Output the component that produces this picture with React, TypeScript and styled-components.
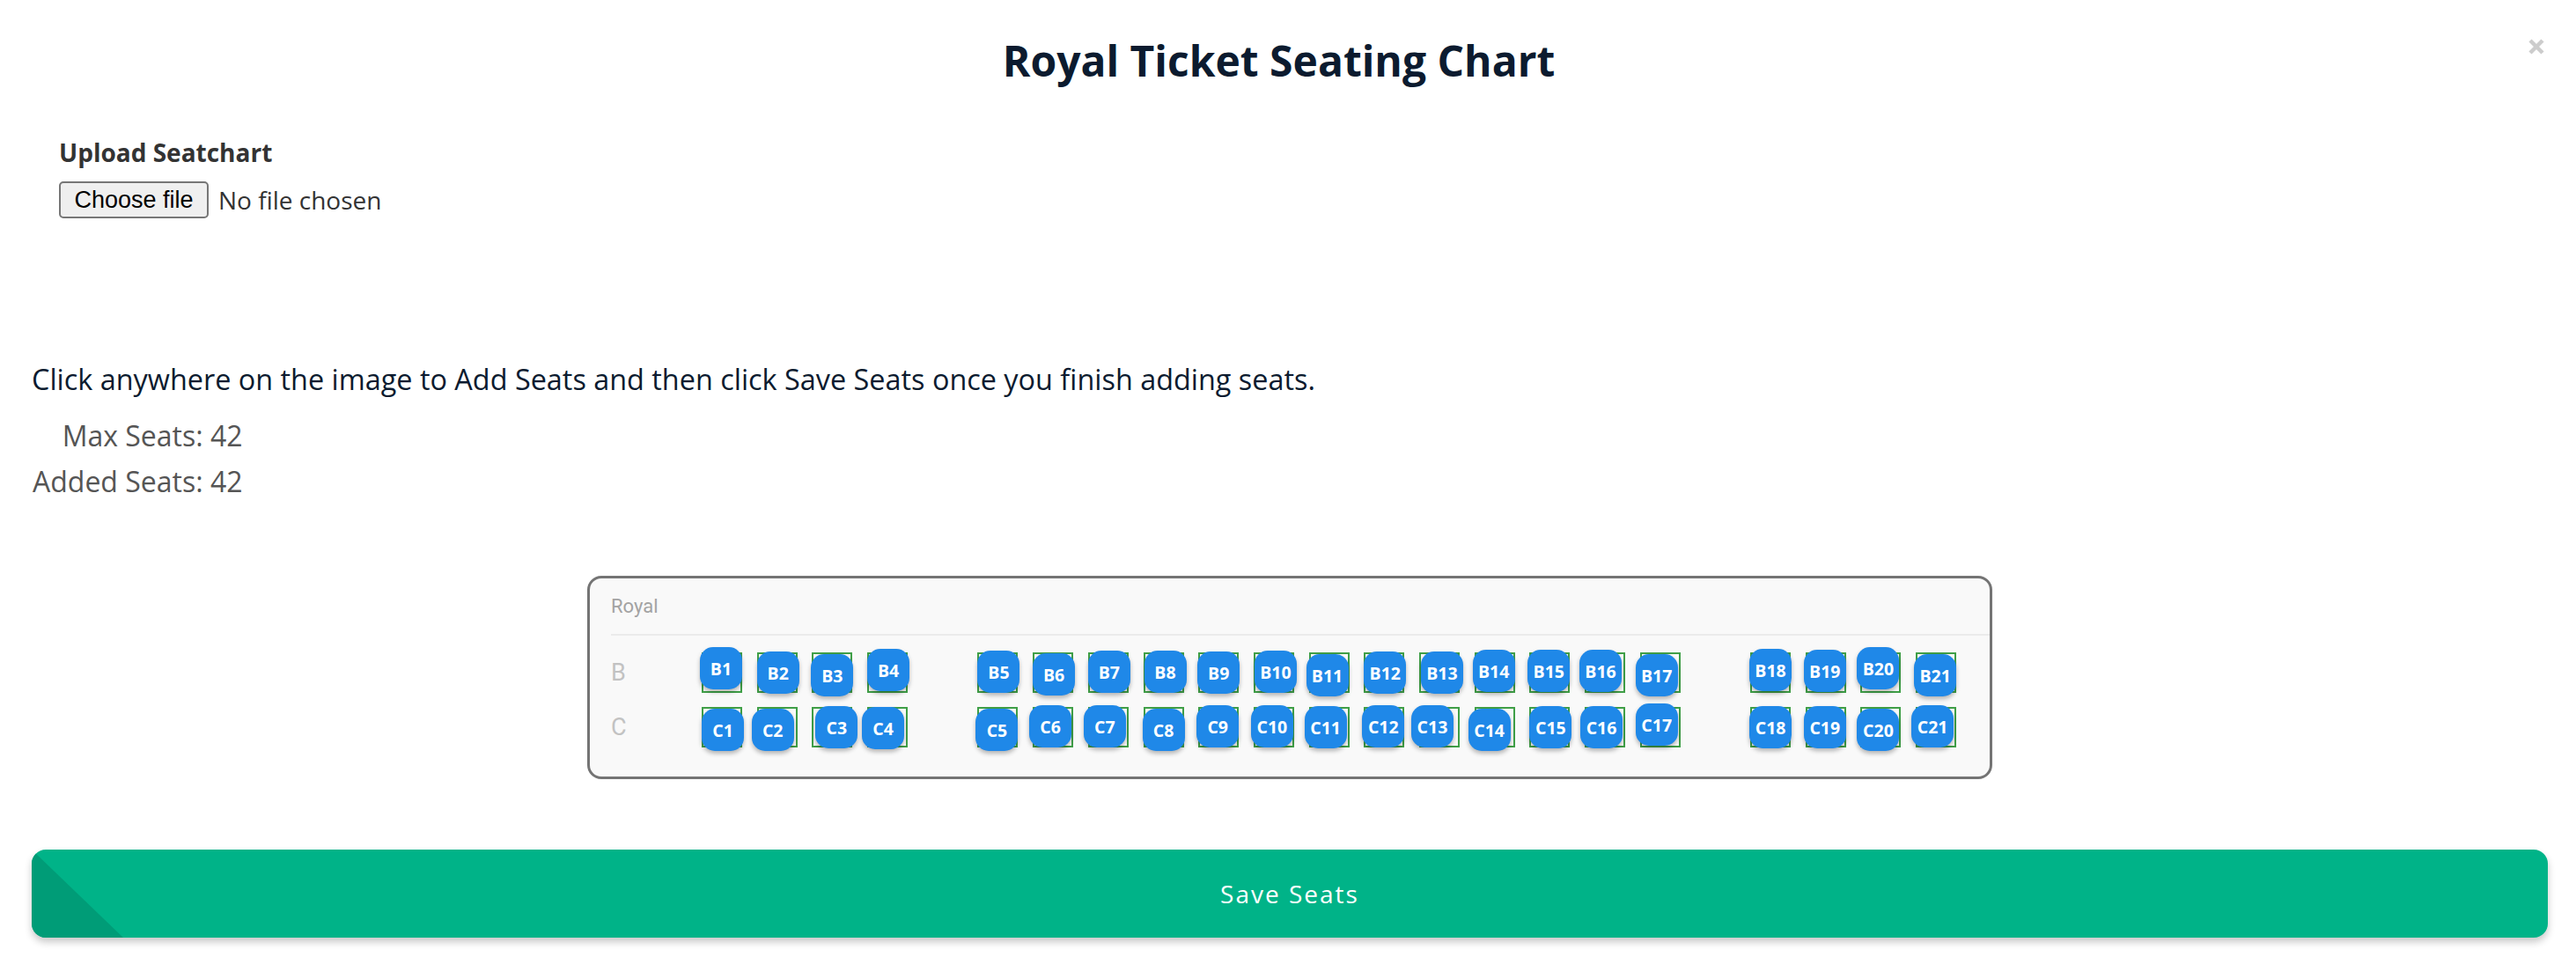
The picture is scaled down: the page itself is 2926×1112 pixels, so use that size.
import { FC } from 'react';
import styled, { createGlobalStyle } from 'styled-components';

const GlobalStyle = createGlobalStyle`
	html, body {
		margin: 0;
		padding: 0;
		background: #ffffff;
	}

	body {
		font-family: 'Open Sans', 'Noto Sans', sans-serif;
		color: #0c1b2f;
	}

	* {
		box-sizing: border-box;
	}
`;

const Modal = styled.div`
	padding: 36px 32px 46px 36px;
`;

const Header = styled.div`
	display: flex;
	align-items: flex-start;
`;

const Title = styled.h1`
	flex: 1;
	margin: 0;
	text-align: center;
	font-size: 48px;
	line-height: 66px;
	font-weight: 700;
	color: #0c1b2f;
`;

const CloseButton = styled.button`
	width: 24px;
	height: 24px;
	margin-top: 5px;
	margin-right: 1px;
	padding: 0;
	border: none;
	background: transparent;
	display: flex;
	align-items: center;
	justify-content: center;
	cursor: pointer;
`;

const Upload = styled.div`
	margin-top: 51px;
	padding-left: 31px;
`;

const UploadLabel = styled.div`
	font-size: 28px;
	line-height: 40px;
	font-weight: 700;
	color: #333333;
`;

const FileRow = styled.div`
	display: flex;
	align-items: center;
	margin-top: 13px;
`;

const FileButton = styled.button`
	height: 42px;
	width: 170px;
	padding: 0;
	border: 2px solid #767676;
	border-radius: 5px;
	background: #efefef;
	font-family: 'Liberation Sans', Arial, sans-serif;
	font-size: 27px;
	color: #000000;
`;

const FileName = styled.span`
	margin-left: 11px;
	font-size: 28px;
	color: #333333;
`;

const Instruction = styled.p`
	margin: 158px 0 0;
	font-size: 32.4px;
	line-height: 48px;
	color: #0c1b2f;
`;

const Counts = styled.div`
	display: inline-flex;
	flex-direction: column;
	align-items: flex-end;
	margin-top: 15px;
	margin-left: 1px;
	font-size: 32px;
	line-height: 52px;
	color: #555555;
`;

const Chart = styled.div`
	width: 1596px;
	margin: 81px auto 0;
	border: 3px solid #747474;
	border-radius: 16px;
	background: #f9f9f9;
	overflow: hidden;
`;

const ChartHeader = styled.div`
	padding: 19px 24px 18px;
	font-family: Roboto, 'Open Sans', sans-serif;
	font-size: 22px;
	line-height: 26px;
	color: #a3a3a3;
`;

const Divider = styled.div`
	height: 2px;
	margin-left: 24px;
	background: #ebebeb;
`;

const Rows = styled.div`
	display: flex;
	flex-direction: column;
	gap: 16px;
	padding: 19px 0 33px 24px;
`;

const Row = styled.div`
	display: flex;
	align-items: center;
`;

const RowLabel = styled.div`
	width: 103px;
	font-family: Roboto, 'Open Sans', sans-serif;
	font-size: 27px;
	color: #c2c2c2;
`;

const Cells = styled.div`
	display: grid;
	grid-template-columns: repeat(23, 46px);
	column-gap: 16.7px;
`;

const Cell = styled.div<{ $empty?: boolean }>`
	position: relative;
	width: 46px;
	height: 46px;
	border: ${({ $empty }) => ($empty ? 'none' : '2px solid #3f9f47')};
`;

const Seat = styled.div`
	position: absolute;
	width: 48px;
	height: 48px;
	border-radius: 15px;
	background: #1f88e8;
	box-shadow: 0 3px 5px rgba(0, 0, 0, 0.28);
	display: flex;
	align-items: center;
	justify-content: center;
	font-size: 19.5px;
	font-weight: 700;
	color: #ffffff;
`;

const SaveButton = styled.button`
	position: relative;
	display: block;
	width: 100%;
	height: 100px;
	margin-top: 80px;
	border: none;
	border-radius: 16px;
	background: #00b388;
	box-shadow: 0 5px 8px rgba(0, 0, 0, 0.22);
	overflow: hidden;
	font-family: 'Open Sans', sans-serif;
	font-size: 28px;
	font-weight: 500;
	letter-spacing: 2px;
	color: #ffffff;
	cursor: pointer;

	&::before {
		content: '';
		position: absolute;
		left: 0;
		top: 0;
		width: 104px;
		height: 100%;
		background: #009c77;
		clip-path: polygon(0 0, 100% 100%, 0 100%);
	}

	span {
		position: relative;
	}
`;

// offsets of each placed seat from its grid box, measured off the chart
const rows: { name: string; offsets: [number, number][] }[] = [
	{
		name: 'B',
		offsets: [
			[-2, -6], [0, -1], [-1, 2], [0, -4], [0, -2], [0, 1], [0, -2], [1, -2], [-1, -1], [1, -2], [-3, 2],
			[0, -1], [2, -1], [-2, -3], [-2, -3], [-6, -3], [-5, 2], [-1, -4], [-2, -3], [-4, -6], [-2, 2],
		],
	},
	{
		name: 'C',
		offsets: [
			[0, 2], [-6, 2], [4, -1], [-6, 0], [-2, 2], [-4, -2], [-5, -2], [-1, 2], [-2, -2], [-3, -2], [-5, -1],
			[-2, -2], [-9, -2], [-7, 2], [0, -1], [-5, -1], [-5, -4], [-1, -1], [-2, -1], [-4, 2], [-5, -2],
		],
	},
];

const gaps = [4, 18];

const SeatRow: FC<{ name: string; offsets: [number, number][] }> = ({ name, offsets }) => {
	let n = 0;
	const cells = Array.from({ length: 23 }, (_, k) => {
		if (gaps.includes(k)) return <Cell key={k} $empty />;
		const [dx, dy] = offsets[n];
		n += 1;
		return (
			<Cell key={k}>
				<Seat style={{ left: dx - 2, top: dy - 2 }}>
					{name}
					{n}
				</Seat>
			</Cell>
		);
	});

	return (
		<Row>
			<RowLabel>{name}</RowLabel>
			<Cells>{cells}</Cells>
		</Row>
	);
};

const App: FC = () => {
	return (
		<>
			<GlobalStyle />
			<Modal>
				<Header>
					<Title>Royal Ticket Seating Chart</Title>
					<CloseButton aria-label='close'>
						<svg width='20' height='20' viewBox='0 0 20 20'>
							<path d='M3 3 L17 17 M17 3 L3 17' stroke='#cccccc' strokeWidth='4.5' />
						</svg>
					</CloseButton>
				</Header>

				<Upload>
					<UploadLabel>Upload Seatchart</UploadLabel>
					<FileRow>
						<FileButton>Choose file</FileButton>
						<FileName>No file chosen</FileName>
					</FileRow>
				</Upload>

				<Instruction>
					Click anywhere on the image to Add Seats and then click Save Seats once you finish adding seats.
				</Instruction>
				<Counts>
					<div>Max Seats: 42</div>
					<div>Added Seats: 42</div>
				</Counts>

				<Chart>
					<ChartHeader>Royal</ChartHeader>
					<Divider />
					<Rows>
						{rows.map((r) => (
							<SeatRow key={r.name} name={r.name} offsets={r.offsets} />
						))}
					</Rows>
				</Chart>

				<SaveButton>
					<span>Save Seats</span>
				</SaveButton>
			</Modal>
		</>
	);
};

export default App;
